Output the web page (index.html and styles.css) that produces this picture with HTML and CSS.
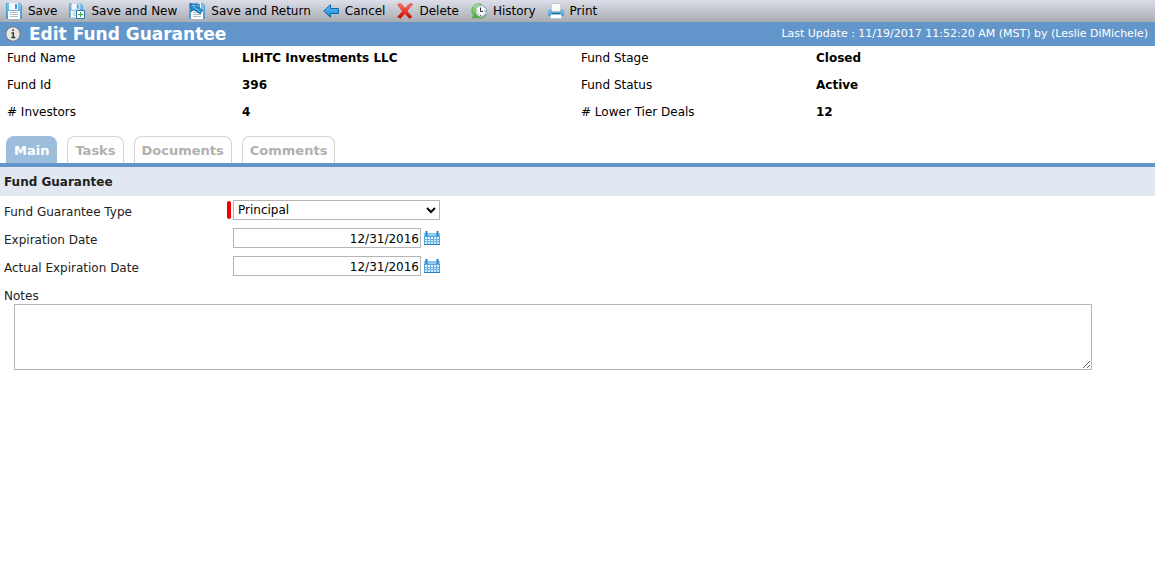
FILE: index.html
```html
<!DOCTYPE html>
<html lang="en">
<head>
<meta charset="utf-8">
<title>Edit Fund Guarantee</title>
<link rel="stylesheet" href="styles.css">
</head>
<body>
<svg class="defs" aria-hidden="true">
  <defs>
    <linearGradient id="blue" x1="0" y1="0" x2="0" y2="1"><stop offset="0" stop-color="#8fcdf0"/><stop offset="1" stop-color="#3c92cd"/></linearGradient>
    <linearGradient id="arrow" x1="0" y1="0" x2="0" y2="1"><stop offset="0" stop-color="#63c4fa"/><stop offset="1" stop-color="#1684d0"/></linearGradient>
    <linearGradient id="red" x1="0" y1="0" x2="0" y2="1"><stop offset="0" stop-color="#ff7768"/><stop offset="0.55" stop-color="#ee3321"/><stop offset="1" stop-color="#b80a06"/></linearGradient>
    <linearGradient id="green" x1="0" y1="0" x2="0" y2="1"><stop offset="0" stop-color="#b5e89a"/><stop offset="1" stop-color="#3fa52c"/></linearGradient>
    <linearGradient id="page" x1="0" y1="0" x2="1" y2="1"><stop offset="0" stop-color="#fff"/><stop offset="1" stop-color="#b9e2fa"/></linearGradient>
    <symbol id="disk" viewBox="0 0 16 16">
      <path d="M.5.5h13l2 2v13H.5z" fill="url(#blue)" stroke="#4a9fd4"/>
      <path d="M3 0h9v7H3z" fill="#f5f8fa"/><path d="M9 1h2v5H9z" fill="#4a9ad0"/>
      <path d="M2 8h12v8H2z" fill="#fff"/>
      <path d="M4 9.500h8M4 11.500h8M4 13.500h8" stroke="#b5bcc2"/>
    </symbol>
    <symbol id="calendar" viewBox="0 0 16 14">
      <path d="M0 2h16v12H0z" fill="#4fa5df"/>
      <path d="M0 2h16v3H0z" fill="#8ccbf0"/>
      <path d="M1 6h14v7H1z" fill="url(#page)"/>
      <path d="M1 8.500h14M1 10.500h14M3.500 6v7M6.500 6v7M9.500 6v7M12.500 6v7" stroke="#69b3e5"/>
      <path d="M2.500 0v5M13.500 0v5" stroke="#2584c8" stroke-width="2"/>
      <path d="M0 13.500h16" stroke="#2382c7"/>
    </symbol>
  </defs>
</svg>

<nav class="toolbar" aria-label="Actions">
  <button class="action" type="button"><svg class="icon"><use href="#disk"/></svg>Save</button>
  <button class="action" type="button"><svg class="icon" viewBox="0 0 16 16"><use href="#disk" width="14" height="15"/><path d="M7.500 7.500h8v8h-8z" fill="#fff" stroke="#2976b9"/><path d="M9 11.500h5M11.500 9v5" stroke="#36a63a"/></svg>Save and New</button>
  <button class="action" type="button"><svg class="icon" viewBox="0 0 16 16"><use href="#disk" width="16" height="16"/><path d="M1 .8h8.500L7.600 2.900l6 4.600-2.400 3.500-6.700-4.600L2.300 9z" fill="#2c88c8" stroke="#17649f" stroke-width=".7"/><path d="M3 2.500h3.500M4.500 4l7 5" fill="none" stroke="#82c9f0"/></svg>Save and Return</button>
  <button class="action" type="button"><svg class="icon" viewBox="0 0 16 16"><path d="M.7 8l6.800-6.300v3.800h8v5h-8v3.800z" fill="url(#arrow)" stroke="#1268ac" stroke-linejoin="round"/></svg>Cancel</button>
  <button class="action" type="button"><svg class="icon" viewBox="0 0 16 16"><path d="M.7 1.500C3 .3 4.600 1 5.200 2L8 5.600 13 .5l2.500.8L10 8l5 6-2.700 1.500L8 10.500 3.500 15.500.5 14l5-5.800z" fill="url(#red)" stroke="#d42a1f" stroke-width=".6" stroke-linejoin="round"/></svg>Delete</button>
  <button class="action" type="button"><svg class="icon" viewBox="0 0 16 16"><path d="M10 .8C4 0 .5 4 .8 8c.1 2.500 1 3.600 2 4.600L1 15l7-.2-.5-6L5.500 11C3 7 6 3 10 3.500z" fill="url(#green)" stroke="#4aa83a" stroke-width=".7"/><circle cx="10" cy="8" r="5.500" fill="#f4f8fa" stroke="#78a1bb" stroke-width=".8"/><path d="M9.500 4.500v4H12" fill="none" stroke="#29323a"/><path d="M5.500 8h1M9.500 12v1M13.500 8h1M12.500 5l.5-.5M12.500 11l.5.500M7 11l.5-.5" stroke="#555"/><path d="M8 15.200c4 .3 6-1 7.500-4" fill="none" stroke="#4aa83a"/></svg>History</button>
  <button class="action" type="button"><svg class="icon" viewBox="0 0 16 16"><path d="M3.500.5h9v8h-9z" fill="#fafafa" stroke="#c9cdd2"/><path d="M.5 7h2.500v2h10V7h2.500v6H.5z" fill="url(#blue)" stroke="#59a2d5" stroke-width=".7"/><path d="M3 11.500h10l1 4H2z" fill="#fff" stroke="#a4c4dc" stroke-width=".7"/><path d="M3.500 10.500h9" stroke="#24648f"/></svg>Print</button>
</nav>

<header class="titlebar">
  <svg class="info" viewBox="0 0 16 16"><circle cx="8" cy="8" r="7.200" fill="#e5e5e3" stroke="#6c7680"/><path d="M6.500 7H8.300v4.500M6.300 11.500h4M7.200 4.300h1.800" fill="none" stroke="#333" stroke-width="1.500"/></svg>
  <h1 class="title">Edit Fund Guarantee</h1>
  <span class="updated">Last Update : 11/19/2017 11:52:20 AM (MST) by (Leslie DiMichele)</span>
</header>

<main>
  <dl class="summary">
    <dt>Fund Name</dt><dd>LIHTC Investments LLC</dd><dt>Fund Stage</dt><dd>Closed</dd>
    <dt>Fund Id</dt><dd>396</dd><dt>Fund Status</dt><dd>Active</dd>
    <dt># Investors</dt><dd>4</dd><dt># Lower Tier Deals</dt><dd>12</dd>
  </dl>

  <div class="tabs" role="tablist">
    <button class="tab active" type="button" role="tab" aria-selected="true">Main</button>
    <button class="tab" type="button" role="tab">Tasks</button>
    <button class="tab" type="button" role="tab">Documents</button>
    <button class="tab" type="button" role="tab">Comments</button>
  </div>

  <h2 class="section">Fund Guarantee</h2>
  <form class="form">
    <div class="row">
      <label for="type">Fund Guarantee Type</label>
      <span class="required"></span>
      <select class="field wide" id="type"><option>Principal</option></select>
    </div>
    <div class="row">
      <label for="expires">Expiration Date</label>
      <span class="optional"></span>
      <input class="field date" id="expires" type="text" value="12/31/2016">
      <button class="pick" type="button" aria-label="Choose expiration date"><svg><use href="#calendar"/></svg></button>
    </div>
    <div class="row">
      <label for="actual">Actual Expiration Date</label>
      <span class="optional"></span>
      <input class="field date" id="actual" type="text" value="12/31/2016">
      <button class="pick" type="button" aria-label="Choose actual expiration date"><svg><use href="#calendar"/></svg></button>
    </div>
    <label class="notes-label" for="notes">Notes</label>
    <textarea class="notes" id="notes"></textarea>
  </form>
</main>
</body>
</html>
```
FILE: styles.css
```css
* { box-sizing: border-box; }
body {
  margin: 0;
  background: #fff;
  color: #000;
  font: 12px/16px Verdana, "DejaVu Sans", sans-serif;
}
button, input, select, textarea { font: inherit; color: inherit; }
button { border: 0; padding: 0; background: none; }
.defs { position: absolute; width: 0; height: 0; }

.toolbar {
  display: flex;
  gap: 12px;
  height: 22px;
  padding: 0 6px;
  background: linear-gradient(#dcdfe9, #a9abb2);
}
.action { display: flex; align-items: center; gap: 6px; white-space: nowrap; }
.icon { width: 16px; height: 16px; }

.titlebar {
  display: flex;
  align-items: center;
  height: 24px;
  padding: 0 7px 0 5px;
  background: #6296ca;
  color: #fff;
}
.info { width: 16px; height: 16px; margin-right: 8px; }
.title { margin: 0; font-family: Verdana, "DejaVu Sans", sans-serif; font-size: 17px; line-height: 24px; }
.updated { margin-left: auto; font-size: 11px; }

.summary {
  display: grid;
  grid-template-columns: 235fr 339fr 235fr 339fr;
  row-gap: 3px;
  margin: 0;
  padding: 0 0 12px 7px;
  line-height: 24px;
}
.summary dd { margin: 0; font-weight: bold; }

.tabs {
  display: flex;
  gap: 10px;
  padding-left: 6px;
  border-bottom: 4px solid #6296ca;
}
.tab {
  height: 27px;
  padding: 2px 7px 0;
  border: 1px solid #d5d5d5;
  border-bottom: 0;
  border-radius: 8px 8px 0 0;
  color: #b0b0b0;
  font-size: 13px;
  font-weight: bold;
}
.tab.active { border-color: #9dbddd; background: #9dbddd; color: #fff; }

.section {
  margin: 0;
  padding: 1px 4px 0;
  background: #e1e8f2;
  color: #222;
  font-size: 12px;
  line-height: 28px;
}
.form { padding: 4px 4px 0; color: #222; }
.row { display: flex; align-items: center; height: 20px; margin-bottom: 8px; }
.row label { width: 223px; padding-top: 3px; }
.required, .optional { width: 4px; height: 18px; margin-right: 2px; }
.required { border-radius: 2px; background: #f00000; }
.field {
  height: 20px;
  border: 1px solid #b5b5b5;
  border-radius: 0;
  background: #fff;
  color: #000;
}
.wide { width: 207px; padding: 0; }
.date { width: 188px; padding: 1px 1px 0; text-align: right; }
.pick { display: flex; margin-left: 3px; }
.pick svg { width: 16px; height: 14px; }
.notes-label { display: block; padding-top: 4px; }
.notes {
  display: block;
  width: 94%;
  height: 66px;
  margin-left: 10px;
  border: 1px solid #b5b5b5;
  border-radius: 0;
  resize: both;
}
```
